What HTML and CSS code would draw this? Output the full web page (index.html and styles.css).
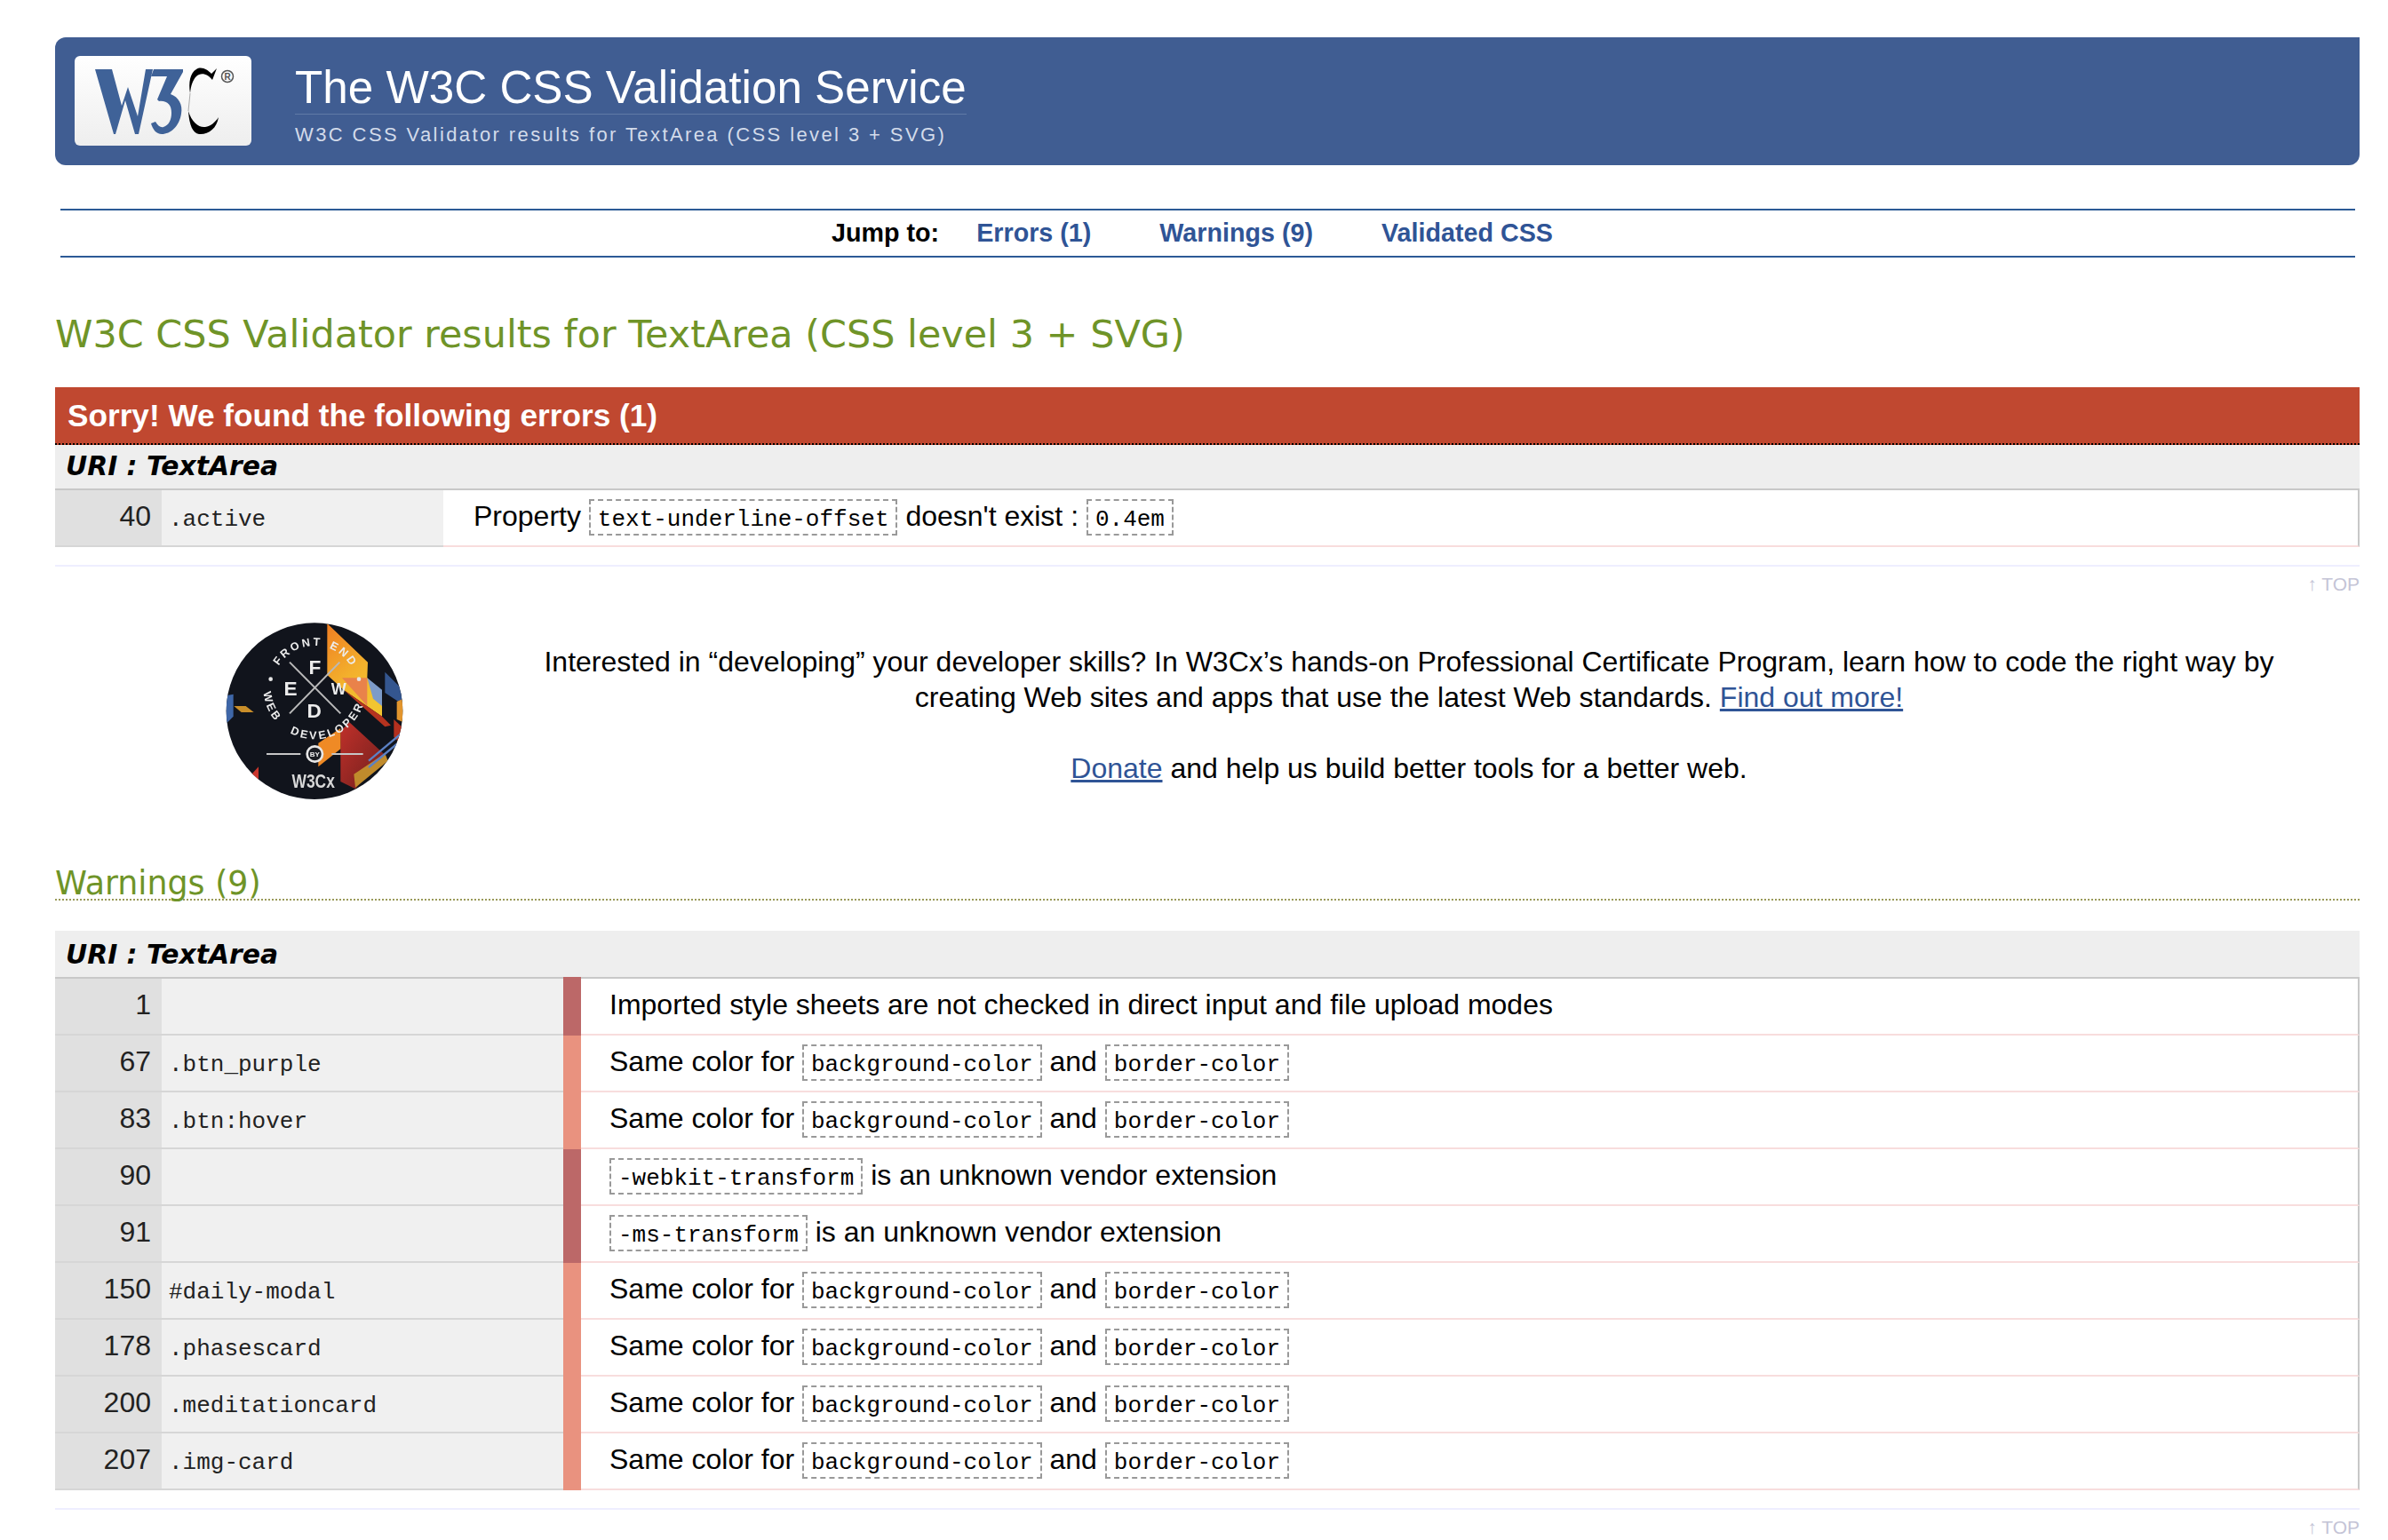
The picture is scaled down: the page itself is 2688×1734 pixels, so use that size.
FILE: index.html
```html
<!DOCTYPE html>
<html lang="en">
<head>
  <meta charset="UTF-8" />
  <title>W3C CSS Validator results for TextArea (CSS level 3 + SVG)</title>
  <link rel="stylesheet" href="styles.css">
</head>
<body>

  <div class="banner">
    <a class="logo" href="#">
      <svg width="199" height="101" viewBox="0 0 199 101">
        <defs>
          <linearGradient id="logoBg" x1="0" y1="0" x2="0" y2="1">
            <stop offset="0" stop-color="#ffffff" />
            <stop offset="1" stop-color="#eeeeee" />
          </linearGradient>
        </defs>
        <rect width="199" height="101" rx="6" fill="url(#logoBg)" />
        <path fill="#3f6298" d="M23 15H42L53 56 60 35 71 68 80 15H88L72 88H68L57 50 46 88H44Z" />
        <path fill="#3f6298" d="M89 15H122V18L108 43C117 46 122 55 120 65 118 79 108 88 98 88 92 88 88 83 86 76L91 74C94 79 97 81 100 80 106 78 109 72 109 64 109 55 104 50 95 51L93 49 104 23H86Z" />
        <path fill="#000000" d="M160 14 155 27C150 20 142 18 137 23 133 27 131 33 130 42 128 30 130 19 137 15 143 11 150 16 154 20Z" />
        <path fill="#000000" d="M128 62C132 75 140 81 147 80 153 79 158 75 162 69 160 82 150 89 140 88 133 87 129 78 128 62Z" />
        <path fill="none" stroke="#aaaaaa" stroke-width="1" d="M130 42 128 62" />
        <circle cx="172" cy="23" r="6.5" fill="none" stroke="#555555" stroke-width="1.5" />
        <text class="logo-reg" x="172" y="26.5">R</text>
      </svg>
    </a>
    <div class="banner-text">
      <h1>The W3C CSS Validation Service</h1>
      <p>W3C CSS Validator results for TextArea (CSS level 3 + SVG)</p>
    </div>
  </div>

  <div class="jump">
    <span class="jump-label">Jump to:</span>
    <a href="#errors">Errors (1)</a>
    <a href="#warnings">Warnings (9)</a>
    <a href="#css">Validated CSS</a>
  </div>

  <h2 class="page-title">W3C CSS Validator results for TextArea (CSS level 3 + SVG)</h2>

  <div id="errors">
    <h3 class="error-title">Sorry! We found the following errors (1)</h3>
    <div class="uri">URI : TextArea</div>
    <table class="report">
      <colgroup><col class="col-line"><col class="col-sel-err"><col></colgroup>
      <tr>
        <td class="line">40</td>
        <td class="sel">.active</td>
        <td class="msg msg-err">Property <code>text-underline-offset</code> doesn't exist : <code>0.4em</code></td>
      </tr>
    </table>
  </div>
  <div class="top"><a href="#">↑ TOP</a></div>

  <div class="promo">
    <svg class="badge" width="260" height="240" viewBox="0 0 780 720">
      <defs>
        <clipPath id="badgeClip"><circle cx="402" cy="362" r="298" /></clipPath>
        <linearGradient id="bandOrange" x1="0" y1="0" x2="0.5" y2="1">
          <stop offset="0" stop-color="#ef7d22" />
          <stop offset="0.6" stop-color="#f3b02c" />
          <stop offset="1" stop-color="#f2c531" />
        </linearGradient>
        <linearGradient id="bandRed" x1="0" y1="0" x2="1" y2="1">
          <stop offset="0" stop-color="#c0302a" />
          <stop offset="1" stop-color="#6e1f1d" />
        </linearGradient>
        <path id="ring" d="M403 425A142 142 0 1 1 403.1 425" />
        <path id="ringLow" d="M229 283A174 174 0 0 0 577 283" />
      </defs>
      <g clip-path="url(#badgeClip)">
        <rect width="780" height="720" fill="#11141c" />
        <path fill="#34568f" d="M640 230 700 290V340L640 300Z" />
        <path fill="url(#bandOrange)" d="M445 66 582 197 580 250 630 300V380L500 290 445 240Z" />
        <path fill="#e9824a" d="M495 250H580V345Z" />
        <path fill="#7d9bc8" d="M580 250 630 290V345L600 320Z" />
        <path fill="#b5331f" d="M500 290 630 380 660 410 640 415Z" />
        <path fill="url(#bandRed)" d="M490 430 520 400 640 510 540 625 490 600Z" />
        <path fill="#ef8a25" d="M415 470 490 420V490L415 550Z" />
        <path fill="#3f67a8" d="M103 310 128 305V380L103 405Z" />
        <path fill="#c98e2a" d="M130 345H170L197 366H155Z" />
        <path fill="#c9352c" d="M190 575 213 550V612Z" />
        <path fill="#e2952d" d="M680 330 702 320V400L680 390Z" />
        <path fill="#b4301f" d="M670 390 702 420V480L670 450Z" />
        <path fill="#c08b2c" d="M535 575 640 505 650 530 540 620Z" />
        <path stroke="#5b80c4" stroke-width="7" fill="none" d="M585 530 702 432M585 552 702 455" />
      </g>
      <path stroke="#b9b9b9" stroke-width="6" fill="none" d="M318 197 490 370M318 370 487 197" />
      <path stroke="#c6c6c6" stroke-width="6" fill="none" d="M240 507H355M460 507H566" />
      <circle cx="403" cy="507" r="26" fill="#1a1c22" stroke="#e6e6e6" stroke-width="8" />
      <text class="badge-by" x="403" y="516">BY</text>
      <text class="badge-letter" x="403" y="238">F</text>
      <text class="badge-letter" x="321" y="310">E</text>
      <text class="badge-letter badge-w" x="484" y="305">W</text>
      <text class="badge-letter" x="401" y="385">D</text>
      <text class="badge-ring"><textPath href="#ring" startOffset="33.6%">FRONT</textPath></text>
      <text class="badge-ring"><textPath href="#ring" startOffset="55.5%">END</textPath></text>
      <text class="badge-ring"><textPath href="#ringLow" startOffset="3%">WEB</textPath></text>
      <text class="badge-ring"><textPath href="#ringLow" startOffset="34%">DEVELOPER</textPath></text>
      <circle cx="254" cy="254" r="7" fill="#e6e6e6" />
      <circle cx="552" cy="254" r="7" fill="#e6e6e6" />
      <text class="badge-brand" x="398" y="622" textLength="145" lengthAdjust="spacingAndGlyphs">W3Cx</text>
    </svg>
    <div class="promo-text">
      <p>Interested in “developing” your developer skills? In W3Cx’s hands-on Professional Certificate Program, learn how to code the right way by creating Web sites and apps that use the latest Web standards. <a href="#">Find out more!</a></p>
      <p><a href="#">Donate</a> and help us build better tools for a better web.</p>
    </div>
  </div>

  <div id="warnings">
    <h2 class="warn-title"><span>Warnings (9)</span></h2>
    <div class="uri">URI : TextArea</div>
    <table class="report">
      <colgroup><col class="col-line"><col class="col-sel"><col class="col-level"><col></colgroup>
      <tr>
        <td class="line">1</td><td class="sel"></td><td class="level level-0"></td>
        <td class="msg">Imported style sheets are not checked in direct input and file upload modes</td>
      </tr>
      <tr>
        <td class="line">67</td><td class="sel">.btn_purple</td><td class="level"></td>
        <td class="msg">Same color for <code>background-color</code> and <code>border-color</code></td>
      </tr>
      <tr>
        <td class="line">83</td><td class="sel">.btn:hover</td><td class="level"></td>
        <td class="msg">Same color for <code>background-color</code> and <code>border-color</code></td>
      </tr>
      <tr>
        <td class="line">90</td><td class="sel"></td><td class="level level-0"></td>
        <td class="msg"><code>-webkit-transform</code> is an unknown vendor extension</td>
      </tr>
      <tr>
        <td class="line">91</td><td class="sel"></td><td class="level level-0"></td>
        <td class="msg"><code>-ms-transform</code> is an unknown vendor extension</td>
      </tr>
      <tr>
        <td class="line">150</td><td class="sel">#daily-modal</td><td class="level"></td>
        <td class="msg">Same color for <code>background-color</code> and <code>border-color</code></td>
      </tr>
      <tr>
        <td class="line">178</td><td class="sel">.phasescard</td><td class="level"></td>
        <td class="msg">Same color for <code>background-color</code> and <code>border-color</code></td>
      </tr>
      <tr>
        <td class="line">200</td><td class="sel">.meditationcard</td><td class="level"></td>
        <td class="msg">Same color for <code>background-color</code> and <code>border-color</code></td>
      </tr>
      <tr>
        <td class="line">207</td><td class="sel">.img-card</td><td class="level"></td>
        <td class="msg">Same color for <code>background-color</code> and <code>border-color</code></td>
      </tr>
    </table>
  </div>
  <div class="top"><a href="#">↑ TOP</a></div>

</body>
</html>
```

FILE: styles.css
```css
body {
  margin: 0;
  padding: 42px 32px 0 62px;
  font-family: 'Liberation Sans', Arial, sans-serif;
  font-size: 32px;
  color: #000;
  background: #fff;
}

a {
  color: #2f5496;
}

.banner {
  display: flex;
  height: 144px;
  padding: 21px 0 0 22px;
  box-sizing: border-box;
  background: #405d92;
  border-radius: 12px 0 12px 12px;
}

.logo {
  display: block;
  width: 199px;
  height: 101px;
}

.logo-reg {
  font: bold 10px 'Liberation Sans', sans-serif;
  text-anchor: middle;
  fill: #555;
}

.banner-text {
  margin-left: 49px;
}

.banner-text h1 {
  margin: 9px 0 0;
  padding-bottom: 2px;
  font-size: 51.2px;
  font-weight: normal;
  line-height: 54px;
  color: #fff;
  border-bottom: 1px solid #617aa6;
}

.banner-text p {
  margin: 8px 0 0;
  font-size: 22px;
  line-height: 30px;
  letter-spacing: 2.4px;
  color: #d3dbea;
}

.jump {
  display: flex;
  justify-content: center;
  gap: 77px;
  margin: 49px 5px 0 6px;
  padding-right: 35px;
  height: 51px;
  line-height: 51px;
  font-size: 28.7px;
  font-weight: bold;
  border-top: 2px solid #2c5a96;
  border-bottom: 2px solid #2c5a96;
}

.jump a {
  text-decoration: none;
}

.jump-label {
  margin-right: -35px;
}

.page-title {
  margin: 60px 0 0;
  font-family: 'DejaVu Sans', Verdana, sans-serif;
  font-size: 42.9px;
  font-weight: normal;
  line-height: 52px;
  color: #6f9428;
}

.error-title {
  margin: 34px 0 0;
  height: 63px;
  padding-left: 14px;
  font-size: 35.2px;
  line-height: 63px;
  color: #fff;
  background: #c04830;
  border-bottom: 2px dotted #000;
}

.uri {
  height: 49px;
  padding-left: 12px;
  font-family: 'DejaVu Sans', Verdana, sans-serif;
  font-size: 29.8px;
  font-weight: bold;
  font-style: italic;
  line-height: 48px;
  background: #eee;
}

#warnings .uri {
  padding-top: 3px;
}

.report {
  width: 100%;
  border-collapse: separate;
  border-spacing: 0;
  table-layout: fixed;
}

.col-line {
  width: 120px;
}

.col-sel-err {
  width: 317px;
}

.col-sel {
  width: 452px;
}

.col-level {
  width: 20px;
}

.report td {
  height: 58px;
  padding: 0 0 4px;
  box-sizing: content-box;
  line-height: 58px;
  vertical-align: top;
  border-bottom: 2px solid #d6d6d6;
}

.report tr:first-child td {
  border-top: 2px solid #c8c8c8;
}

.line {
  padding-right: 12px !important;
  text-align: right;
  background: #e0e0e0;
  color: #222;
}

.report .sel {
  padding: 4px 0 0 8px;
  font-family: 'Liberation Mono', 'Courier New', monospace;
  font-size: 26px;
  background: #f0f0f0;
  color: #222;
}

.level {
  background: #e9927f;
  border-bottom-color: #e9927f !important;
  border-top-color: #bc6868 !important;
}

.level-0 {
  background: #bc6868;
  border-bottom-color: #bc6868 !important;
}

.msg {
  padding-left: 32px !important;
  border-bottom-color: #f8dddd !important;
  border-right: 2px solid #c8c8c8;
  white-space: nowrap;
}

.msg-err {
  padding-left: 34px !important;
}

code {
  display: inline-block;
  height: 41px;
  padding: 0 8px;
  box-sizing: border-box;
  font-family: 'Liberation Mono', 'Courier New', monospace;
  font-size: 26px;
  line-height: 42px;
  vertical-align: baseline;
  border: 2px dashed #999;
}

.top {
  margin-top: 20px;
  height: 31px;
  padding-top: 3px;
  border-top: 2px solid #eef;
  font-size: 21px;
  line-height: 34px;
  text-align: right;
}

.top a {
  color: #c4c4d6;
  text-decoration: none;
}

.promo {
  display: flex;
  height: 295px;
}

.badge {
  display: block;
  margin: 8px 0 0 158px;
  filter: blur(0.5px);
}

.promo-text {
  width: 2020px;
  margin-left: 96px;
  padding-top: 53px;
  line-height: 40px;
  text-align: center;
}

.promo-text p {
  margin: 0 0 40px;
}

.badge-letter {
  font: bold 68px 'Liberation Sans', sans-serif;
  fill: #ececec;
  text-anchor: middle;
}

.badge-w {
  font-size: 54px;
}

.badge-ring {
  font: bold 38px 'Liberation Sans', sans-serif;
  letter-spacing: 8px;
  fill: #ececec;
}

.badge-by {
  font: bold 24px 'Liberation Sans', sans-serif;
  fill: #ececec;
  text-anchor: middle;
}

.badge-brand {
  font: bold 64px 'Liberation Sans', sans-serif;
  fill: #d8d8d8;
  text-anchor: middle;
}

.warn-title {
  margin: 0 0 34px;
  height: 45px;
  font-family: 'DejaVu Sans', Verdana, sans-serif;
  font-size: 36.4px;
  font-weight: normal;
  line-height: 56px;
  color: #6f9428;
  border-bottom: 2px dotted #9a9a5a;
}
```
